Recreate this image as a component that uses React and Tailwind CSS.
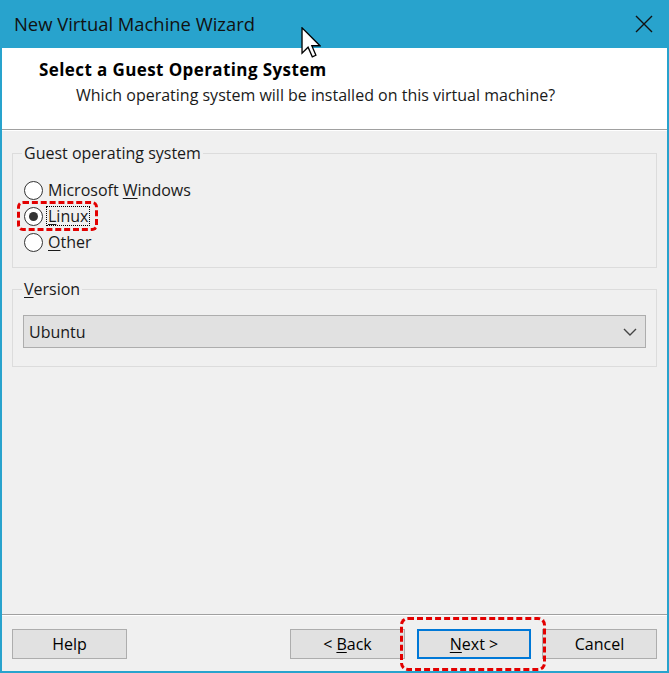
import { useState } from 'react'

const font = { fontFamily: '"Open Sans", "Noto Sans", sans-serif' }

// Windows-style radio button
const Radio = ({ checked, children, focused }) => (
  <div className="flex items-center h-[26px]">
    <span className="w-[19px] h-[19px] rounded-full border border-[#333] bg-white flex items-center justify-center shrink-0">
      {checked && <span className="w-[9px] h-[9px] rounded-full bg-[#333]" />}
    </span>
    <span
      className={`ml-[3px] leading-[18px] px-px ${focused ? 'border border-dotted border-black' : 'border border-transparent'}`}
    >
      {children}
    </span>
  </div>
)

const Button = ({ children, primary, className = '' }) => (
  <button
    className={`h-[30px] bg-[#e1e1e1] text-[16px] text-black flex items-center justify-center ${
      primary ? 'border-2 border-[#0078d7]' : 'border border-[#adadad]'
    } ${className}`}
  >
    {children}
  </button>
)

const Cursor = () => (
  <svg width="20" height="31" viewBox="0 0 12 19" className="absolute left-[301px] top-[27px]">
    <path
      d="M0.5 0.5 L0.5 16 L4.2 12.4 L6.8 18.3 L9 17.3 L6.5 11.5 L11.5 11.5 Z"
      fill="white"
      stroke="black"
      strokeWidth="0.8"
      strokeLinejoin="miter"
    />
  </svg>
)

export default function App() {
  const [os] = useState('linux')

  return (
    <div className="relative w-[669px] h-[673px] bg-[#28a3cd] flex flex-col text-[#1a1a1a]" style={font}>
      {/* Title bar */}
      <div className="h-[48px] flex items-center justify-between pl-[14px] pr-[16px] shrink-0">
        <span className="text-[18.4px] text-[#111]">New Virtual Machine Wizard</span>
        <svg width="18" height="18" viewBox="0 0 18 18">
          <path d="M1 1 L17 17 M17 1 L1 17" stroke="#111" strokeWidth="1.4" />
        </svg>
      </div>

      <div className="flex-1 flex flex-col mx-[2px] mb-[2px] bg-[#f0f0f0]">
        {/* Header */}
        <div className="h-[81px] bg-white flex flex-col pt-[11px] shrink-0">
          <div className="pl-[37px] text-[17px] font-bold tracking-[0.4px] text-black leading-[22px]">
            Select a Guest Operating System
          </div>
          <div className="pl-[74px] text-[16px] leading-[22px] mt-[3px]">
            Which operating system will be installed on this virtual machine?
          </div>
        </div>
        <div className="h-px bg-[#a0a0a0]" />
        <div className="h-px bg-white" />

        {/* Body */}
        <div className="flex-1 px-[10px] pt-[12px] text-[16px]">
          <fieldset className="border border-[#dcdcdc] h-[125px]">
            <legend className="px-[2px] ml-[9px] leading-[20px]">Guest operating system</legend>
            <div className="pl-[11px] pt-[14px]">
              <Radio checked={os === 'windows'}>
                Microsoft <span className="underline underline-offset-2">W</span>indows
              </Radio>
              <Radio checked={os === 'linux'} focused>
                <span className="underline underline-offset-2">L</span>inux
              </Radio>
              <Radio checked={os === 'other'}>
                <span className="underline underline-offset-2">O</span>ther
              </Radio>
            </div>
          </fieldset>

          <fieldset className="mt-[11px] border border-[#dcdcdc] h-[88px]">
            <legend className="px-[2px] ml-[9px] leading-[20px]">
              <span className="underline underline-offset-2">V</span>ersion
            </legend>
            <div className="px-[10px] pt-[16px]">
              <div className="h-[33px] bg-[#e1e1e1] border border-[#adadad] flex items-center justify-between pl-[5px] pr-[8px]">
                <span>Ubuntu</span>
                <svg width="14" height="8" viewBox="0 0 14 8">
                  <path d="M1 1 L7 7 L13 1" fill="none" stroke="#444" strokeWidth="1.4" />
                </svg>
              </div>
            </div>
          </fieldset>
        </div>

        {/* Footer */}
        <div className="h-px bg-[#a0a0a0]" />
        <div className="h-px bg-white" />
        <div className="flex items-center px-[10px] pt-[13px] pb-[12px]">
          <Button className="w-[115px]">Help</Button>
          <div className="flex-1" />
          <Button className="w-[115px]">
            &lt; <span className="underline underline-offset-2 ml-[4px]">B</span>ack
          </Button>
          <Button primary className="w-[114px] ml-[12px]">
            <span className="underline underline-offset-2">N</span>ext &gt;
          </Button>
          <Button className="w-[115px] ml-[11px]">Cancel</Button>
        </div>
      </div>

      {/* Annotation overlays */}
      <div className="absolute left-[17px] top-[201px] w-[81px] h-[30px] border-[3px] border-dashed border-[#e30000] rounded-[6px]" />
      <div className="absolute left-[400px] top-[617px] w-[146px] h-[54px] border-[3px] border-dashed border-[#e30000] rounded-[8px]" />
      <Cursor />
    </div>
  )
}
